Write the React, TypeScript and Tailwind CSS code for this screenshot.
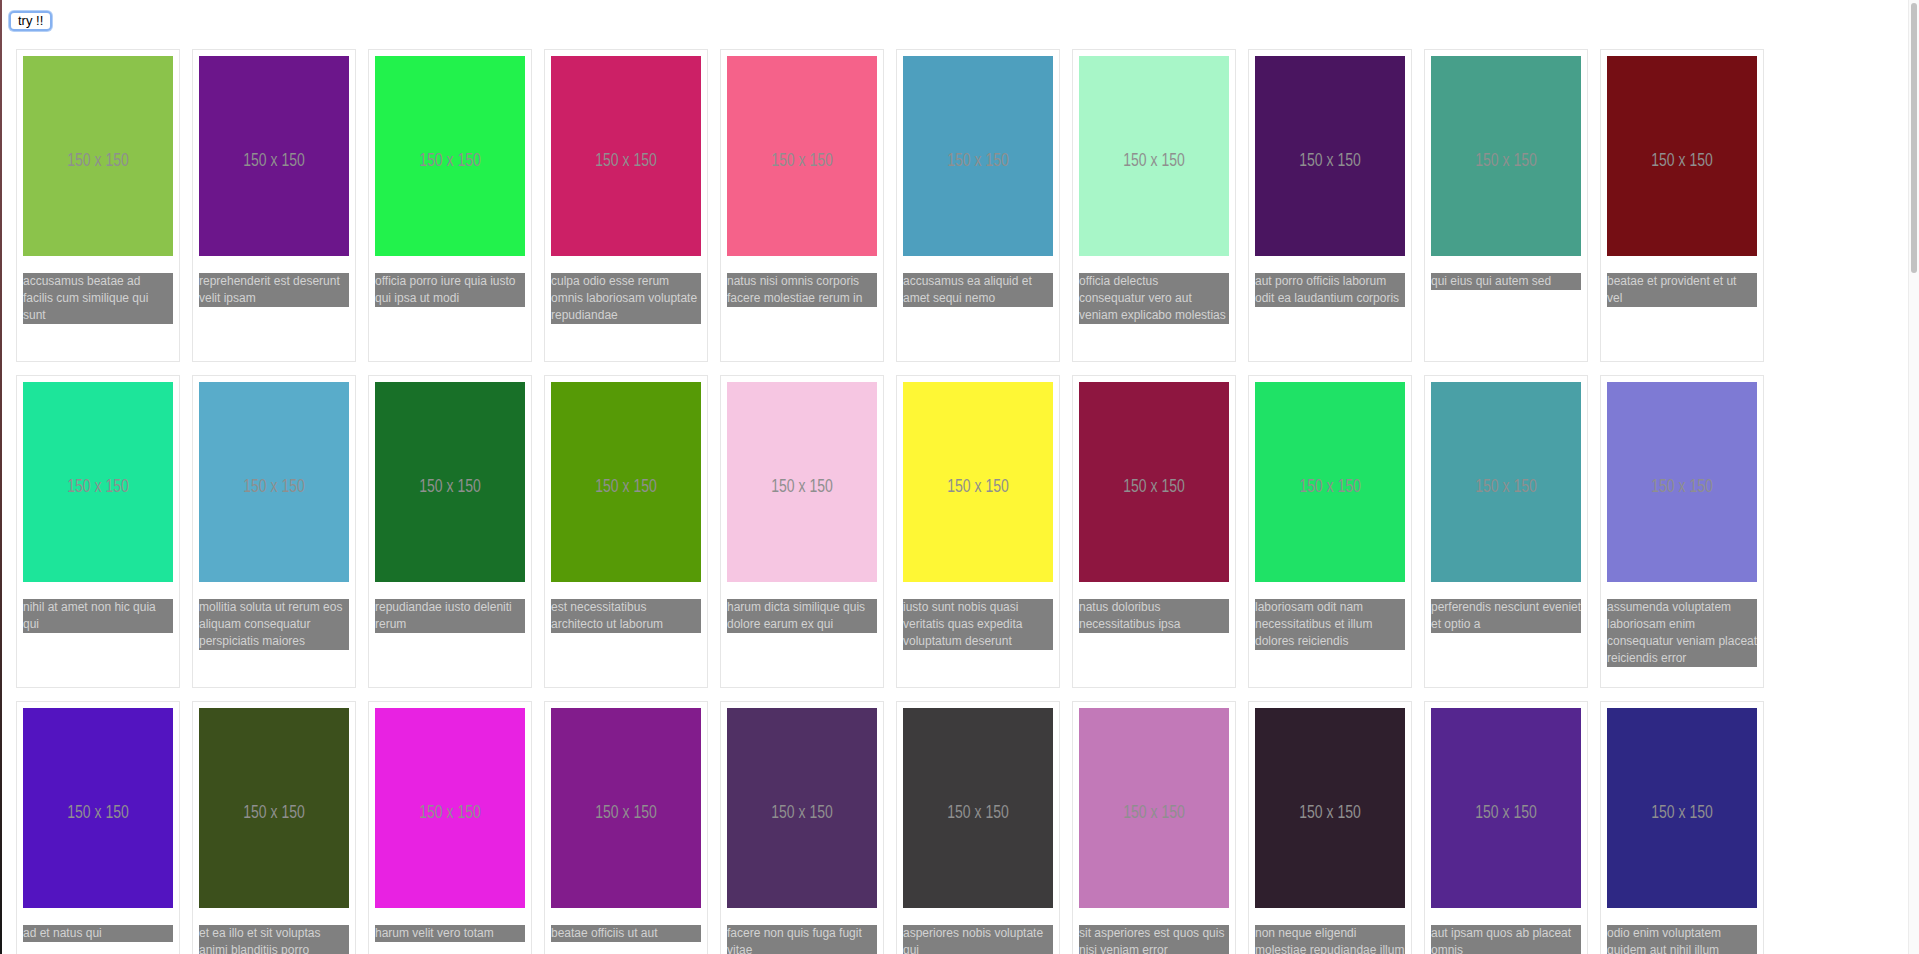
import React from "react";

// caption lines are broken where the reference breaks them
const photos = [
  { lines: ["accusamus beatae ad", "facilis cum similique qui", "sunt"], color: "#8bc34b" },
  { lines: ["reprehenderit est deserunt", "velit ipsam"], color: "#6c168b" },
  { lines: ["officia porro iure quia iusto", "qui ipsa ut modi"], color: "#22f24c" },
  { lines: ["culpa odio esse rerum", "omnis laboriosam voluptate", "repudiandae"], color: "#cc2066" },
  { lines: ["natus nisi omnis corporis", "facere molestiae rerum in"], color: "#f5628a" },
  { lines: ["accusamus ea aliquid et", "amet sequi nemo"], color: "#4e9fbe" },
  { lines: ["officia delectus", "consequatur vero aut", "veniam explicabo molestias"], color: "#a8f6c8" },
  { lines: ["aut porro officiis laborum", "odit ea laudantium corporis"], color: "#4a1560" },
  { lines: ["qui eius qui autem sed"], color: "#479f8a" },
  { lines: ["beatae et provident et ut", "vel"], color: "#750e14" },
  { lines: ["nihil at amet non hic quia", "qui"], color: "#1de59a" },
  { lines: ["mollitia soluta ut rerum eos", "aliquam consequatur", "perspiciatis maiores"], color: "#59acca" },
  { lines: ["repudiandae iusto deleniti", "rerum"], color: "#187028" },
  { lines: ["est necessitatibus", "architecto ut laborum"], color: "#569a06" },
  { lines: ["harum dicta similique quis", "dolore earum ex qui"], color: "#f6c6e2" },
  { lines: ["iusto sunt nobis quasi", "veritatis quas expedita", "voluptatum deserunt"], color: "#fef735" },
  { lines: ["natus doloribus", "necessitatibus ipsa"], color: "#8e1640" },
  { lines: ["laboriosam odit nam", "necessitatibus et illum", "dolores reiciendis"], color: "#1fe266" },
  { lines: ["perferendis nesciunt eveniet", "et optio a"], color: "#4aa0a6" },
  {
    lines: ["assumenda voluptatem", "laboriosam enim", "consequatur veniam placeat", "reiciendis error"],
    color: "#7e7ad4",
  },
  { lines: ["ad et natus qui"], color: "#5314c0" },
  { lines: ["et ea illo et sit voluptas", "animi blanditiis porro"], color: "#3c501c" },
  { lines: ["harum velit vero totam"], color: "#e822e2" },
  { lines: ["beatae officiis ut aut"], color: "#821c8c" },
  { lines: ["facere non quis fuga fugit", "vitae"], color: "#503064" },
  { lines: ["asperiores nobis voluptate", "qui"], color: "#3d3b3c" },
  { lines: ["sit asperiores est quos quis", "nisi veniam error"], color: "#c279b8" },
  { lines: ["non neque eligendi", "molestiae repudiandae illum", "voluptatem qui aut"], color: "#2f1f2d" },
  { lines: ["aut ipsam quos ab placeat", "omnis"], color: "#55268f" },
  { lines: ["odio enim voluptatem", "quidem aut nihil illum"], color: "#2e2884" },
];

function PhotoCard({ lines, color }: { lines: string[]; color: string }) {
  return (
    <div className="h-[313px] w-[164px] border border-[#e6e6e6] bg-white p-[6px]">
      <div
        className="flex h-[200px] w-[150px] items-center justify-center pt-[5px]"
        style={{ backgroundColor: color }}
      >
        <span className="inline-block scale-y-[1.33] text-[14px] leading-none text-[#8f8f8f]">
          150 x 150
        </span>
      </div>
      <p className="mt-[17px] overflow-hidden bg-[#808080] text-[12px] leading-[17px] text-[#d2d2d2]">
        {lines.map((l, i) => (
          <span key={i} className="block whitespace-nowrap">
            {l}
          </span>
        ))}
      </p>
    </div>
  );
}

export default function App() {
  return (
    <div className="flex h-screen overflow-hidden bg-white font-['Liberation_Sans',Arial,sans-serif]">
      <div className="w-[2px] bg-linear-to-b from-[#7a4a4f] via-[#5a3434] to-[#161616]" />
      <main className="flex-1 overflow-hidden">
        <div className="flex pl-[7px] pt-[11px]">
          <button className="h-[20px] rounded-[5px] border-2 border-[#86b1f0] bg-white px-[7px] text-[13px] leading-[14px] text-black shadow-[0_0_0_1px_#b5d0f6]">
            try !!
          </button>
        </div>
        <div className="grid grid-cols-[repeat(10,164px)] gap-x-3 gap-y-[13px] pl-[14px] pt-[18px]">
          {photos.map((p, i) => (
            <PhotoCard key={i} lines={p.lines} color={p.color} />
          ))}
        </div>
      </main>
      <div className="w-[11px] border-l border-[#ececec] bg-[#fafafa] px-[2px] pt-[3px]">
        <div className="h-[270px] rounded-full bg-[#c2c2c2]" />
      </div>
    </div>
  );
}
